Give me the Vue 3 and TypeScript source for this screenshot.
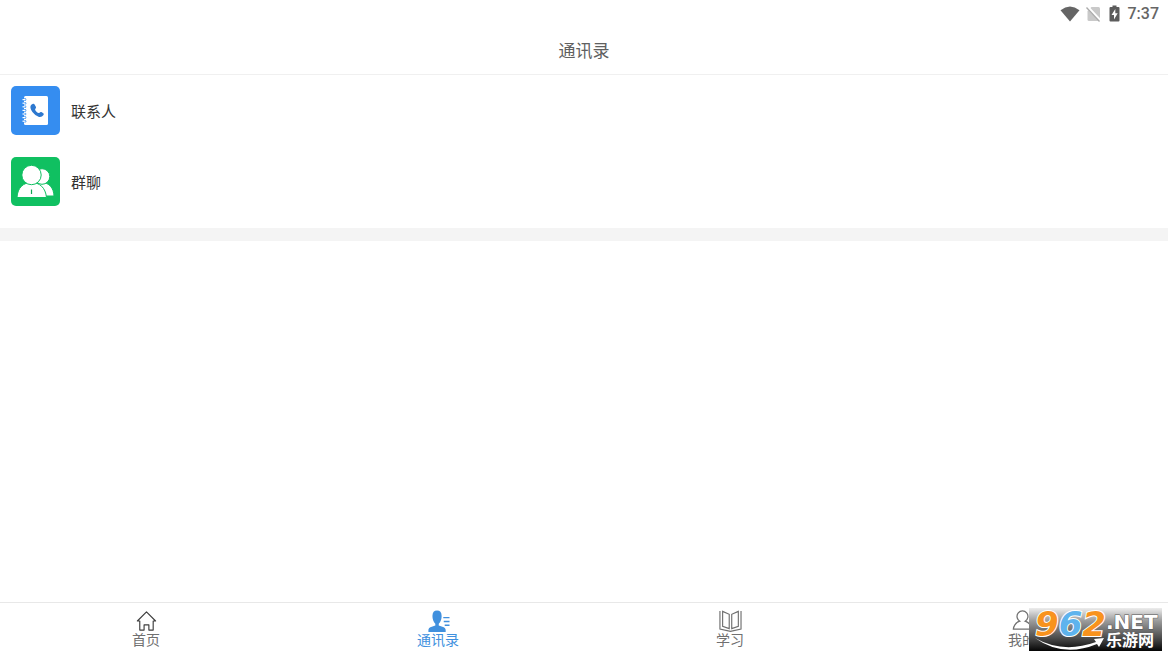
<script setup lang="ts">
import { ref } from 'vue'

interface Entry { id: string; label: string }

const entries: Entry[] = [
  { id: 'contacts', label: '联系人' },
  { id: 'groups', label: '群聊' },
]
const tabs: Entry[] = [
  { id: 'home', label: '首页' },
  { id: 'book', label: '通讯录' },
  { id: 'study', label: '学习' },
  { id: 'mine', label: '我的' },
]
const active = ref('book')
</script>

<template>
  <div class="page">
    <div class="status">
      <svg class="wifi" viewBox="0 0 20 16" aria-hidden="true"><path d="M.5 4.2Q10-3.2 19.5 4.2L10 15.5Z" fill="#656565" /></svg>
      <svg class="sim" viewBox="0 0 15 16" aria-hidden="true">
        <path d="M5.5 1H12.5Q14 1 14 2.5V15H3Q1.5 15 1.5 13.5V5Z" fill="#c9c9c9" />
        <path d="M1 .5 14.5 15" stroke="#fff" stroke-width="3" />
        <path d="M.5 1.5 13.5 15.5" stroke="#aaa" stroke-width="1.3" />
      </svg>
      <svg class="battery" viewBox="0 0 11 17" aria-hidden="true">
        <path d="M3.5.5h4V2H9.5Q10.5 2 10.5 3V15.5Q10.5 16.5 9.5 16.5H1.5Q.5 16.5.5 15.5V3Q.5 2 1.5 2h2Z" fill="#5c5c5c" />
        <path d="M6.3 4 2.5 10H5v4.5L8.700 8.300H6.300Z" fill="#fff" />
      </svg>
      <time>7:37</time>
    </div>
    <header class="header"><h1>通讯录</h1></header>
    <main>
      <div class="list">
        <button v-for="e in entries" :key="e.id" type="button" class="row">
          <svg v-if="e.id === 'contacts'" class="tile" viewBox="0 0 49 49" aria-hidden="true">
            <rect width="49" height="49" rx="5" fill="#358df0" />
            <rect x="13" y="10" width="24" height="29" rx="1.5" fill="#fff" />
            <g v-for="n in 7" :key="n">
              <circle cx="14" :cy="10 + n * 3.6" r="1.3" fill="#358df0" />
              <path :d="`M11.5 ${10 + n * 3.6}h3`" stroke="#fff" stroke-width="1.2" />
            </g>
            <path d="M20.300 18.700 22 17.800Q23 17.500 23.600 18.500L25 21Q25.300 22 24.200 22.900 23.600 23.800 25.200 25.500 27.200 27.400 28.200 27 29.500 25.500 30.400 26L32.300 27.200Q33.200 28 32.500 28.900 30.800 31.500 28 30.900 24.500 30 21.400 25.900 18 21 20.300 18.700Z" fill="#2d78cf" />
          </svg>
          <svg v-else class="tile" viewBox="0 0 49 49" aria-hidden="true">
            <rect width="49" height="49" rx="5" fill="#10c061" />
            <g fill="#fff" stroke="#10c061">
              <path d="M24 39C24 29 26 25.500 31 25.500 38 25.500 42.800 31 43 39Z" />
              <circle cx="31" cy="19.5" r="7.8" />
              <path d="M6 40.500C6.500 30.500 12.500 25.500 20.500 25.500S34.500 30.500 35.500 40.500Z" />
              <circle cx="20.5" cy="18" r="9.7" />
            </g>
            <path d="M20.500 32.500v4.500" stroke="#10a555" stroke-width="1.2" />
          </svg>
          <span>{{ e.label }}</span>
        </button>
      </div>
      <div class="divider"></div>
    </main>
    <nav class="tabs">
      <button v-for="t in tabs" :key="t.id" type="button" class="tab" :class="{ active: active === t.id }" @click="active = t.id">
        <svg viewBox="0 0 24 24" aria-hidden="true" fill="none" stroke="currentColor" stroke-width="1.2">
          <path v-if="t.id === 'home'" d="M3 12.500 12.500 3 22 12.500H19.500V22H15V16.500H10V22H5.500V12.500Z" stroke="#3e3e3e" stroke-linejoin="round" />
          <g v-else-if="t.id === 'book'">
            <path d="M2 24V22Q2 19.300 5.500 18.500L9.200 17.300V15.300Q6.200 12.500 6.200 7.200 6.300 1.500 11 1.500T15.800 7.200Q15.800 12.500 12.800 15.300V17.300L16.500 18.500Q20 19.300 20 22V24Z" fill="currentColor" stroke="none" />
            <path d="M17.500 9H24M18 13H24M19 17H24" stroke-width="1.5" />
          </g>
          <path v-else-if="t.id === 'study'" d="M1.500 2V21L12.500 23.400 23.500 21V2M4.300 2.500 11.200 5.500V20.500L4.300 18ZM20.700 2.500 13.800 5.500V20.500L20.700 18Z" />
          <path v-else d="M9.700 12.700A5.700 5.700 0 1 1 15.300 12.700C19 14 21.500 16.500 22 21H3C3.500 16.500 6 14 9.700 12.700Z" stroke-width="1.3" />
        </svg>
        <span>{{ t.label }}</span>
      </button>
    </nav>
    <div class="watermark">
      <svg viewBox="0 0 133 43" role="img" aria-label="962.NET 乐游网">
        <defs>
          <linearGradient id="shade" x2="0" y2="1">
            <stop stop-color="#ededed" /><stop offset=".3" stop-color="#9b9b9b" /><stop offset=".7" stop-color="#4b4b4b" /><stop offset="1" stop-color="#050505" />
          </linearGradient>
        </defs>
        <rect width="133" height="43" fill="url(#shade)" />
        <path d="M6 30Q34 46 67 34L65 31 75 30 70 39 68 36Q34 50 6 30Z" fill="#fff" />
        <text class="digits" x="6" y="28"><tspan fill="#f8931e">9</tspan><tspan fill="#5eb3ed">6</tspan><tspan fill="#f8931e">2</tspan></text>
        <text class="net" x="77" y="21">.NET</text>
        <text class="cn" x="77" y="38">乐游网</text>
      </svg>
    </div>
  </div>
</template>

<style>
body { margin: 0; background: #fff; }
</style>

<style scoped>
.page {
  position: relative;
  display: flex;
  flex-direction: column;
  min-height: 100vh;
  background: #fff;
  color: #333;
  font-family: "Noto Sans CJK SC", sans-serif;
}
button { border: 0; padding: 0; background: none; color: inherit; font-family: inherit; cursor: pointer; }
svg { display: block; }
.status { display: flex; align-items: center; justify-content: flex-end; height: 27px; padding-right: 9px; box-sizing: border-box; }
.wifi { width: 20px; height: 16px; margin-right: 6px; }
.sim { width: 15px; height: 16px; margin-right: 8px; }
.battery { width: 11px; height: 17px; margin-right: 8px; }
time { font: 500 16px/27px Roboto, sans-serif; color: #666; }
.header { height: 47px; border-bottom: 1px solid #f0f0f0; text-align: center; }
h1 { margin: 0; font-size: 17px; font-weight: 400; line-height: 45px; color: #606060; }
main { flex: 1; }
.list { display: flex; flex-direction: column; gap: 22px; padding: 11px 11px 22px; }
.row { display: flex; align-items: center; gap: 11px; width: 100%; font-size: 15px; line-height: 22px; text-align: left; }
.tile { width: 49px; height: 49px; flex: none; }
.divider { height: 13px; background: #f4f4f4; }
.tabs { display: flex; height: 54px; border-top: 1px solid #e8e8e8; }
.tab { flex: 1; display: flex; flex-direction: column; align-items: center; justify-content: flex-start; padding-top: 6px; font-size: 14px; line-height: 14px; color: #707070; }
.tab svg { width: 24px; height: 23px; }
.tab.active { color: #4090de; }
.watermark { position: absolute; right: 6px; bottom: 6px; width: 133px; height: 43px; }
.watermark svg { width: 133px; height: 43px; overflow: visible; }
.digits { font: italic bold 34px "DejaVu Sans", sans-serif; stroke: #fff; stroke-width: 2px; paint-order: stroke; }
.net { font: bold 20px "DejaVu Sans", sans-serif; fill: #fff; stroke: #555; stroke-width: 1px; paint-order: stroke; }
.cn { font: bold 16px "Noto Sans CJK SC", sans-serif; fill: #fff; }
</style>
